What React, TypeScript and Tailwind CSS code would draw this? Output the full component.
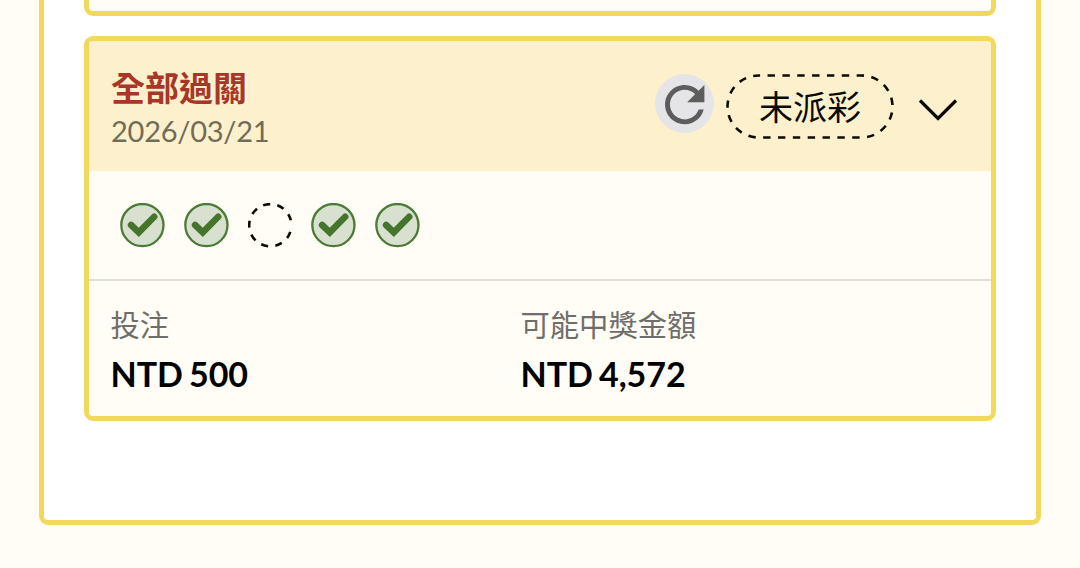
import React from 'react';

type LegStatus = 'won' | 'pending';

interface Ticket {
  title: string;
  date: string;
  status: string;
  legs: LegStatus[];
  amounts: { label: string; value: string }[];
}

const ticket: Ticket = {
  title: '全部過關',
  date: '2026/03/21',
  status: '未派彩',
  legs: ['won', 'won', 'pending', 'won', 'won'],
  amounts: [
    { label: '投注', value: 'NTD 500' },
    { label: '可能中獎金額', value: 'NTD 4,572' },
  ],
};

const RefreshButton = () => (
  <button className="size-[59px] shrink-0 rounded-full bg-[#e5e5e7]">
    <svg viewBox="0 0 59 59" className="block size-full" fill="none">
      <path
        transform="translate(0.2 1.1) scale(2.46)"
        fill="#5d5d5e"
        d="M17.65 6.35C16.2 4.9 14.21 4 12 4c-4.42 0-7.99 3.58-7.99 8s3.57 8 7.99 8c3.73 0 6.84-2.55 7.73-6h-2.08c-.82 2.33-3.04 4-5.65 4-3.31 0-6-2.69-6-6s2.69-6 6-6c1.66 0 3.14.69 4.22 1.78L13 11h7V4l-2.35 2.35z"
      />
    </svg>
  </button>
);

const StatusPill = ({ label }: { label: string }) => (
  <div className="relative flex h-[65px] w-[168px] shrink-0 items-center justify-center">
    <svg viewBox="0 0 168 65" className="absolute inset-0 size-full" fill="none">
      <rect x="1.5" y="1.5" width="165" height="62" rx="31" stroke="#0c0a05" strokeWidth="2.6" strokeDasharray="7.4 7.45" strokeDashoffset="5.8" />
    </svg>
    <span className="text-[34px] leading-none text-[#0c0a05]">{label}</span>
  </div>
);

const LegIcon = ({ status }: { status: LegStatus }) => (
  <svg viewBox="0 0 45 45" className="size-[45px]" fill="none">
    {status === 'won' ? (
      <>
        <circle cx="22.4" cy="22.1" r="21.1" fill="#d8e1d0" stroke="#4c7a38" strokeWidth="2.3" />
        <path d="M11.1 22L18.8 29.4L34.2 13.8" stroke="#45752d" strokeWidth="6.6" strokeLinecap="round" />
      </>
    ) : (
      <path d="M42.3 28.9A21.1 21.1 0 1 1 42.8 17.3" stroke="#0c0a05" strokeWidth="2.6" strokeDasharray="7 7.2" />
    )}
  </svg>
);

const TicketCard = ({ data }: { data: Ticket }) => (
  <div className="h-[385px] overflow-hidden rounded-[9px] border-5 border-[#f3d85e] bg-[#fffdf6]">
    <div className="flex h-[130px] justify-between bg-[#fdf1cd] pr-8 pl-[22px]">
      <div className="pt-[27px]">
        <h2 className="text-[34px] leading-[40px] font-bold text-[#a8372a]">{data.title}</h2>
        <p className="mt-[5px] text-[29px] leading-[36px] tracking-[-0.25px] text-[#716c58]">{data.date}</p>
      </div>
      <div className="flex pt-[33px]">
        <RefreshButton />
        <div className="ml-3">
          <StatusPill label={data.status} />
        </div>
        <svg viewBox="0 0 42 24" className="mt-[23px] ml-[23px] h-6 w-[42px]" fill="none">
          <path d="M3 3.5L21 21.5L39 3.5" stroke="#0c0a05" strokeWidth="3.2" />
        </svg>
      </div>
    </div>

    <div className="flex h-[110px] gap-[18.8px] border-b-2 border-[#e2e0da] pt-[32px] pl-[31px]">
      {data.legs.map((leg, i) => (
        <LegIcon key={i} status={leg} />
      ))}
    </div>

    <div className="flex pt-[26px] pl-[21.5px]">
      {data.amounts.map((item) => (
        <div key={item.label} className="w-[410px]">
          <p className="text-[29.3px] leading-[36px] text-[#6f6e6a]">{item.label}</p>
          <p className="mt-[9px] text-[34px] leading-[44px] font-bold tracking-[-0.05px] text-black [word-spacing:-2px]">{item.value}</p>
        </div>
      ))}
    </div>
  </div>
);

export default function App() {
  return (
    <div className="h-[568px] overflow-hidden bg-[#fffdf6] px-[39px] font-[Lato,'Noto_Sans_CJK_TC',sans-serif]">
      <div className="h-[525px] rounded-b-[9px] border-5 border-t-0 border-[#f3d85e] bg-white px-10">
        <div className="h-4 rounded-b-[9px] border-5 border-t-0 border-[#f3d85e] bg-[#fffdf6]" />
        <div className="mt-5">
          <TicketCard data={ticket} />
        </div>
      </div>
    </div>
  );
}
